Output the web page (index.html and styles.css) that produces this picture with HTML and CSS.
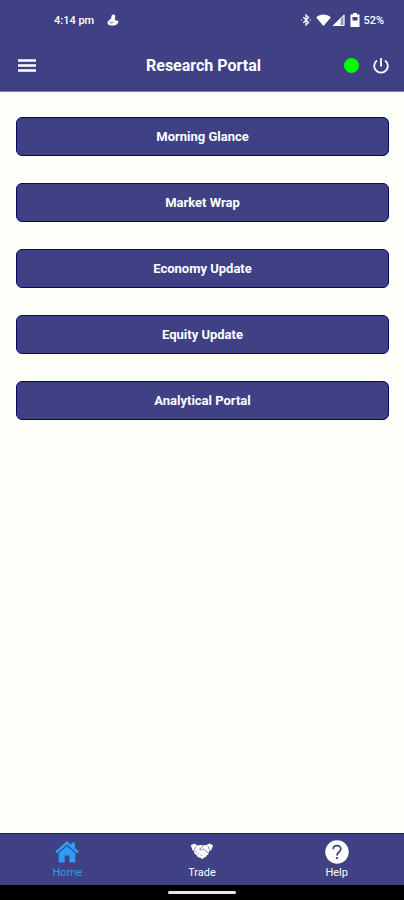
FILE: index.html
```html
<!DOCTYPE html>
<html lang="en">
<head>
    <meta charset="UTF-8">
    <meta name="viewport" content="width=device-width, initial-scale=1.0">
    <title>Research Portal</title>
    <link rel="stylesheet" href="styles.css">
</head>
<body>

    <div class="status-bar">
        <span class="status-time">4:14 pm</span>
        <svg class="status-app" width="12" height="12" viewBox="0 0 12 12" fill="currentColor">
            <path d="M4.4 2C5-.2 8.2-.1 8.3 2.4C8.3 3.4 7.8 4.5 8 5.8C8.8 6.8 9.8 7 11.4 6.4C11.6 9.8 9.6 11.6 6 11.6C3 11.6.6 10.8.5 8.9C.6 6.5 3.6 5.8 4.4 3.8Z"/>
            <path d="M2.8 8.4C4 9.2 5.6 9 6.4 7.6" fill="none" stroke="#3f4184" stroke-width=".8"/>
        </svg>
        <div class="status-icons">
            <svg width="12" height="12" viewBox="0 0 12 12" fill="none" stroke="currentColor" stroke-width="1.2">
                <path d="M3.2 3.2L8.6 8.6L6 11V1L8.6 3.4L3.2 8.8"/>
                <path d="M1 6H2.4M9.6 6H11"/>
            </svg>
            <svg class="wifi" width="15" height="12" viewBox="0 0 15 12" fill="currentColor">
                <path d="M.2 3.4C4.2-.4 10.8-.4 14.8 3.4L7.5 12Z"/>
            </svg>
            <svg width="13" height="12" viewBox="0 0 13 12" fill="currentColor">
                <path d="M12.5 0V12H.5Z" opacity=".45"/>
                <path d="M8.6 4V12H.5Z"/>
                <path d="M12 1.2V11.5H1.7Z" fill="none" stroke="currentColor" stroke-width="1"/>
            </svg>
            <svg class="battery" width="10" height="14" viewBox="0 0 10 14">
                <path d="M3 0H7V1.5H9.5V14H.5V1.5H3Z" fill="currentColor"/>
                <path d="M2.5 4H7.5V7.5H2.5Z" fill="#3f4184"/>
            </svg>
            <span>52%</span>
        </div>
    </div>

    <header class="header">
        <button class="icon-button" aria-label="Menu">
            <svg width="18" height="14" viewBox="0 0 18 14" fill="none" stroke="currentColor" stroke-width="2.4">
                <path d="M0 1.5H18M0 6.5H18M0 11.5H18"/>
            </svg>
        </button>
        <h1>Research Portal</h1>
        <div class="header-actions">
            <span class="online-dot"></span>
            <button class="icon-button" aria-label="Log out">
                <svg width="16" height="16" viewBox="0 0 16 16" fill="none" stroke="currentColor" stroke-width="1.8">
                    <path d="M8 0V8.5"/>
                    <path d="M4 2.4A6.8 6.8 0 1 0 12 2.4"/>
                </svg>
            </button>
        </div>
    </header>

    <main class="content">
        <button class="report-button">Morning Glance</button>
        <button class="report-button">Market Wrap</button>
        <button class="report-button">Economy Update</button>
        <button class="report-button">Equity Update</button>
        <button class="report-button">Analytical Portal</button>
    </main>

    <nav class="tab-bar">
        <a href="#home" class="tab active">
            <svg width="24" height="24" viewBox="0 0 24 24" fill="currentColor">
                <path d="M12 1L16.5 5V2.5H20V8.1L23.8 11.6L22 13.6L12 4.6L2 13.6L.2 11.6Z"/>
                <path d="M12 5.9L20.2 13.2V22.5H14.3V15.5H9.7V22.5H3.8V13.2Z"/>
            </svg>
            <span>Home</span>
        </a>
        <a href="#trade" class="tab">
            <svg width="24" height="24" viewBox="0 0 24 24" fill="currentColor">
                <path d="M.8 5.2L4.6 3.6L7 5.6L11 5L13 5.6L16.5 5L19.4 3.6L23.2 5.2L21 10.6L18.8 11.6L18.4 14.6L16.8 15.2L15.8 17L14 17.4L12.4 19.2L10.4 17.8L8 17.2L6.6 15.2L4.4 13.6L4.2 11.4L2.4 10Z"/>
                <path d="M12.8 6.2L9.4 9.6Q11.6 10.8 13.4 8.8L18.4 13.2M3.8 10.8L6 6.4M20.2 10.8L17.8 6" fill="none" stroke="#3f4184" stroke-width=".6"/>
                <path d="M10.6 14.6L12 16.4M5.4 12.4L7 11M7.4 14.6L9 13" fill="none" stroke="#3f4184" stroke-width=".5"/>
            </svg>
            <span>Trade</span>
        </a>
        <a href="#help" class="tab">
            <svg width="24" height="24" viewBox="0 0 24 24">
                <circle cx="12" cy="12" r="11.7" fill="currentColor"/>
                <path d="M8.2 9.2C8.2 4.4 15.8 4.4 15.8 9C15.8 12 12 12 12 15.4" fill="none" stroke="#3f4184" stroke-width="1.7"/>
                <circle cx="12" cy="18.2" r="1.1" fill="#3f4184"/>
            </svg>
            <span>Help</span>
        </a>
    </nav>

    <div class="gesture-bar">
        <div class="gesture-handle"></div>
    </div>

</body>
</html>
```
FILE: styles.css
```css
body {
    display: flex;
    flex-direction: column;
    min-height: 100vh;
    margin: 0;
    background-color: #fffffa;
    font-family: Roboto, sans-serif;
}

button {
    font-family: inherit;
    color: white;
    border: none;
    cursor: pointer;
}

svg {
    display: block;
}

.status-bar {
    display: flex;
    align-items: center;
    height: 40px;
    padding: 0 20px 0 54px;
    background-color: #3f4184;
    color: white;
    font-size: 11px;
    font-weight: 500;
}

.status-app {
    margin-left: 13px;
}

.status-icons {
    display: flex;
    align-items: center;
    margin-left: auto;
}

.status-icons .wifi {
    margin: 0 1px 0 4px;
}

.status-icons .battery {
    margin: 0 3px 0 5px;
}

.header {
    display: grid;
    grid-template-columns: 1fr auto 1fr;
    align-items: center;
    height: 52px;
    padding: 0 15px 0 18px;
    box-sizing: border-box;
    background-color: #3f4184;
    color: white;
    border-bottom: 1px solid #7c7da8;
}

.header h1 {
    margin: 0;
    font-size: 16px;
    font-weight: 700;
}

.icon-button {
    padding: 0;
    background: none;
}

.header-actions {
    display: flex;
    align-items: center;
    justify-content: flex-end;
    gap: 14px;
}

.online-dot {
    width: 15px;
    height: 15px;
    border-radius: 50%;
    background-color: #00ff00;
}

.content {
    display: flex;
    flex-direction: column;
    flex-grow: 1;
    gap: 27px;
    padding: 25px 15px 25px 16px;
}

.report-button {
    min-height: 39px;
    padding: 8px;
    background-color: #3f4184;
    border: 1px solid #08086a;
    border-radius: 6px;
    font-size: 13px;
    font-weight: 700;
}

.tab-bar {
    display: grid;
    grid-template-columns: repeat(3, 1fr);
    height: 52px;
    box-sizing: border-box;
    background-color: #3f4184;
    border-top: 1px solid #1b1f78;
}

.tab {
    display: flex;
    flex-direction: column;
    align-items: center;
    padding-top: 6px;
    color: white;
    font-size: 11px;
    line-height: 17px;
    text-decoration: none;
}

.tab.active {
    color: #2f9bf4;
}

.gesture-bar {
    display: flex;
    justify-content: center;
    align-items: center;
    height: 15px;
    background-color: black;
}

.gesture-handle {
    width: 68px;
    height: 3px;
    border-radius: 2px;
    background-color: #e6e6e6;
}
```
